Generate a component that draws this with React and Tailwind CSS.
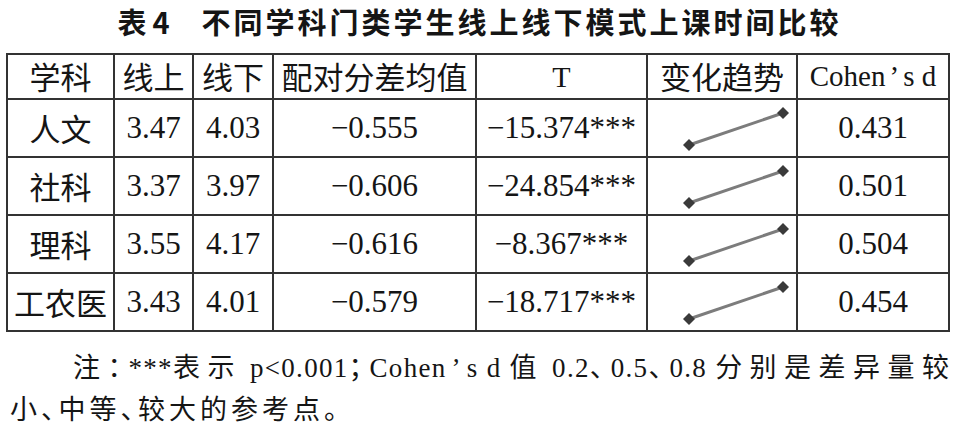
import React from 'react';

const cjk = "font-['Noto_Sans_CJK_SC',sans-serif]";
const serif = "font-['Liberation_Serif','Noto_Sans_CJK_SC',serif]";

const rows = [
  { name: '人文', on: '3.47', off: '4.03', diff: '−0.555', t: '−15.374***', d: '0.431' },
  { name: '社科', on: '3.37', off: '3.97', diff: '−0.606', t: '−24.854***', d: '0.501' },
  { name: '理科', on: '3.55', off: '4.17', diff: '−0.616', t: '−8.367***', d: '0.504' },
  { name: '工农医', on: '3.43', off: '4.01', diff: '−0.579', t: '−18.717***', d: '0.454' },
];

const cell = 'flex items-center justify-center border-r-2 border-b-2 border-[#333]';

// little two-point line chart for the trend column
const Trend = () => (
  <svg width="148" height="56" viewBox="0 0 148 56">
    <line x1="41" y1="45" x2="135" y2="13" stroke="#7c7c7c" strokeWidth="3" />
    <polygon points="41,39 47,45 41,51 35,45" fill="#3a3a3a" />
    <polygon points="135,7 141,13 135,19 129,13" fill="#3a3a3a" />
  </svg>
);

const Lat = ({ children }) => <span className="tracking-[1.3px]">{children}</span>;

export default function App() {
  return (
    <div className="w-[959px] h-[430px] bg-white text-[#151515] overflow-hidden">
      <h1 className={`${cjk} font-bold text-[29px] leading-[42px] text-center`}>
        <span>表</span>
        <span className="ml-[6px]">4</span>
        <span className="ml-[32px] tracking-[3px]">不同学科门类学生线上线下模式上课时间比较</span>
      </h1>

      <div className="mt-[11px] ml-[6px] w-[944px] grid grid-cols-[107px_79px_80px_203px_171px_150px_152px] border-l-2 border-t-2 border-[#333]">
        {/* header */}
        <div className={`${cell} h-[45px] ${cjk} text-[31px]`}>学科</div>
        <div className={`${cell} h-[45px] ${cjk} text-[31px]`}>线上</div>
        <div className={`${cell} h-[45px] ${cjk} text-[31px]`}>线下</div>
        <div className={`${cell} h-[45px] ${cjk} text-[31px]`}>配对分差均值</div>
        <div className={`${cell} h-[45px] ${serif} text-[30px]`}>T</div>
        <div className={`${cell} h-[45px] ${cjk} text-[31px]`}>变化趋势</div>
        <div className={`${cell} h-[45px] font-['Liberation_Serif',serif] text-[29px]`}>
          Cohen<span className="px-[4px]">’</span>s d
        </div>

        {rows.map((r) => (
          <React.Fragment key={r.name}>
            <div className={`${cell} h-[58px] ${cjk} text-[31px]`}>{r.name}</div>
            <div className={`${cell} h-[58px] ${serif} text-[31px]`}>{r.on}</div>
            <div className={`${cell} h-[58px] ${serif} text-[31px]`}>{r.off}</div>
            <div className={`${cell} h-[58px] ${serif} text-[31px]`}>{r.diff}</div>
            <div className={`${cell} h-[58px] ${serif} text-[31px]`}>{r.t}</div>
            <div className={`${cell} h-[58px] !items-start !justify-start`}><Trend /></div>
            <div className={`${cell} h-[58px] ${serif} text-[31px]`}>{r.d}</div>
          </React.Fragment>
        ))}
      </div>

      {/* note */}
      <div className={`mt-[15px] ml-[10px] w-[940px] ${serif} text-[27px] leading-[42px] [font-feature-settings:'halt']`}>
        <div className="pl-[63px] whitespace-nowrap tracking-[7.5px]">
          注：<Lat>***</Lat>表示<Lat> p&lt;0.001</Lat>；<Lat>Cohen<span className="px-[5px]">’</span>s d </Lat>值<Lat> 0.2</Lat>、<Lat>0.5</Lat>、<Lat>0.8 </Lat>分别是差异量较
        </div>
        <div className="tracking-[4px]">小、中等、较大的参考点。</div>
      </div>
    </div>
  );
}
